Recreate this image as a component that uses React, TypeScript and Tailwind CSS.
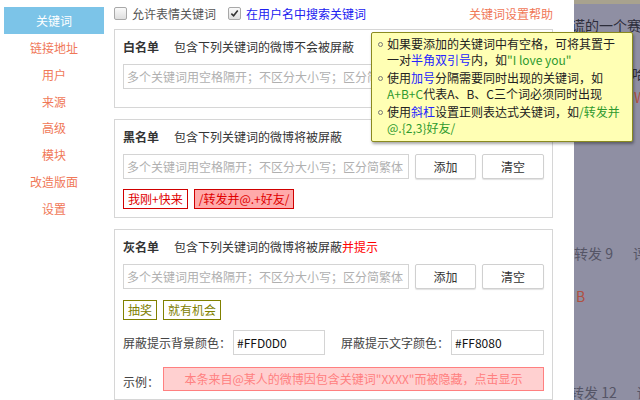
import { ReactNode } from "react";

const navItems = ["链接地址", "用户", "来源", "高级", "模块", "改造版面", "设置"];
const placeholder = "多个关键词用空格隔开；不区分大小写；区分简繁体";

const CheckBox = ({ checked }: { checked?: boolean }) => (
  <span className="flex h-[13px] w-[13px] items-center justify-center rounded-[2px] border border-[#a8a8a8] bg-gradient-to-b from-[#fafafa] to-[#dedede]">
    {checked && (
      <svg viewBox="0 0 10 10" className="h-[9px] w-[9px]">
        <path d="M1.5 5.2 L4 7.6 L8.6 1.8" fill="none" stroke="#333" strokeWidth="1.8" />
      </svg>
    )}
  </span>
);

const KeywordInput = () => (
  <div className="flex h-[25px] gap-[6px]">
    <div className="flex min-w-0 flex-1 items-center overflow-hidden whitespace-nowrap border border-[#d4d4d4] px-[3px] text-[#b0b0b0]">
      {placeholder}
    </div>
    <button className="w-[61px] shrink-0 rounded-[2px] border border-[#d0d0d0] bg-white text-[#333] shadow-[0_1px_1px_rgba(0,0,0,0.12)]">添加</button>
    <button className="w-[62px] shrink-0 rounded-[2px] border border-[#d0d0d0] bg-white text-[#333] shadow-[0_1px_1px_rgba(0,0,0,0.12)]">清空</button>
  </div>
);

const Section = ({ title, desc, children }: { title: string; desc: ReactNode; children?: ReactNode }) => (
  <section className="border border-[#d6d6d6] px-[8px] pt-[8px] pb-[8px]">
    <div className="flex h-[18px] items-center text-[#333]">
      <span className="w-[51px] font-bold">{title}</span>
      <span>{desc}</span>
    </div>
    <div className="mt-[8px]">
      <KeywordInput />
    </div>
    {children}
  </section>
);

const Tag = ({ children, className }: { children: ReactNode; className: string }) => (
  <span className={`flex h-[20px] items-center border px-[4px] ${className}`}>{children}</span>
);

const Blue = ({ children }: { children: ReactNode }) => <span className="text-[#2424ff]">{children}</span>;
const Green = ({ children }: { children: ReactNode }) => <span className="text-[#2e9a2e]">{children}</span>;

const HelpItem = ({ children }: { children: ReactNode }) => (
  <li className="flex gap-[4px] leading-[16px]">
    <span className="mt-[6px] h-[5px] w-[5px] shrink-0 rounded-full border border-[#777]" />
    <span className="block leading-[16px]">{children}</span>
  </li>
);

export default function App() {
  return (
    <div className="relative flex h-[400px] w-[640px] overflow-hidden font-['Noto_Sans_CJK_SC',sans-serif] text-[12px]">
      <div className="flex w-[574px] shrink-0 bg-white">
        <nav className="flex w-[104px] flex-col pl-[4px] pt-[7px] text-center leading-[27px] text-[#f07858]">
          <div className="h-[27px] bg-[#7cc4e8] text-white">关键词</div>
          {navItems.map((item) => (
            <div key={item} className="h-[26.8px]">{item}</div>
          ))}
        </nav>

        <main className="flex w-[449px] flex-col pl-[10px]">
          <div className="flex h-[32px] items-center pb-[2px]">
            <CheckBox />
            <span className="ml-[5px] text-[#555]">允许表情关键词</span>
            <span className="ml-[12px]">
              <CheckBox checked />
            </span>
            <span className="ml-[5px] text-[#2020f0]">在用户名中搜索关键词</span>
            <span className="ml-auto text-[#f07858]">关键词设置帮助</span>
          </div>

          <Section title="白名单" desc="包含下列关键词的微博不会被屏蔽">
            <div className="h-[10px]" />
          </Section>

          <div className="mt-[11px]">
            <Section title="黑名单" desc="包含下列关键词的微博将被屏蔽">
              <div className="mt-[10px] flex gap-[6px]">
                <Tag className="border-[#d00000] text-[#e00000]">我刚+快来</Tag>
                <Tag className="border-[#d00000] bg-[#ffaaaa] text-[#e00000]">/转发并@.+好友/</Tag>
              </div>
            </Section>
          </div>

          <div className="mt-[11px]">
            <Section
              title="灰名单"
              desc={
                <>
                  包含下列关键词的微博将被屏蔽<span className="text-[#ff0000]">并提示</span>
                </>
              }
            >
              <div className="mt-[11px] flex gap-[6px]">
                <Tag className="border-[#808000] text-[#808000]">抽奖</Tag>
                <Tag className="border-[#808000] text-[#808000]">就有机会</Tag>
              </div>
              <div className="mt-[10px] flex h-[25px] items-center text-[#444]">
                <span className="w-[110px]">屏蔽提示背景颜色：</span>
                <span className="flex h-[25px] w-[92px] items-center border border-[#d4d4d4] px-[3px] text-[#111]">#FFD0D0</span>
                <span className="ml-[16px] w-[110px]">屏蔽提示文字颜色：</span>
                <span className="flex h-[25px] w-[93px] items-center border border-[#d4d4d4] px-[3px] text-[#111]">#FF8080</span>
              </div>
              <div className="mt-[12px] flex items-end">
                <span className="w-[40px] leading-[18px] text-[#444]">示例：</span>
                <div className="flex h-[24px] flex-1 items-center justify-center border border-[#ff8080] bg-[#ffd0d0] text-[#ff8080]">
                  本条来自@某人的微博因包含关键词"XXXX"而被隐藏，点击显示
                </div>
              </div>
            </Section>
          </div>
        </main>
      </div>

      <div className="relative flex flex-1 flex-col overflow-hidden border-t-[4px] border-[#a8a28e] bg-[#8f8fa3] text-[14px] leading-[24px] text-[#2c2c3a]">
        <div className="-ml-[3px] mt-[9px] whitespace-nowrap">谎的一个赛</div>
        <div className="ml-[2px]">?</div>
        <div className="ml-[58px]">哈</div>
        <div className="ml-[60px] text-[#b05040]">W</div>
        <div className="mt-[132px] flex items-center whitespace-nowrap text-[#555566]">
          <span>转发 9</span>
          <span className="mx-[10px] h-[16px] w-px bg-[#555566]" />
          <span>评</span>
        </div>
        <div className="mt-[11px] h-px bg-[#9c9cae]" />
        <div className="ml-[2px] mt-[8px] text-[#b05040]">B</div>
        <div className="mt-[72px] flex items-center whitespace-nowrap text-[#555566]">
          <span className="-ml-[4px]">转发 12</span>
          <span className="mx-[10px] h-[16px] w-px bg-[#555566]" />
          <span>评</span>
        </div>
      </div>

      <div className="absolute left-[371px] top-[32px] w-[262px] rounded-[2px] border border-[#8a8a20] bg-[#ffffb4] pb-[5px] pl-[6px] pr-[4px] pt-[3px] text-[#222] shadow-[1px_2px_3px_rgba(0,0,0,0.35)]">
        <ul className="flex flex-col gap-[2px]">
          <HelpItem>
            如果要添加的关键词中有空格，可将其置于
            <br />
            一对<Blue>半角双引号</Blue>内，如<Green>"I love you"</Green>
          </HelpItem>
          <HelpItem>
            使用<Blue>加号</Blue>分隔需要同时出现的关键词，如
            <br />
            <Green>A+B+C</Green>代表A、B、C三个词必须同时出现
          </HelpItem>
          <HelpItem>
            使用<Blue>斜杠</Blue>设置正则表达式关键词，如<Green>/转发并</Green>
            <br />
            <Green>@.{"{2,3}"}好友/</Green>
          </HelpItem>
        </ul>
      </div>
    </div>
  );
}
